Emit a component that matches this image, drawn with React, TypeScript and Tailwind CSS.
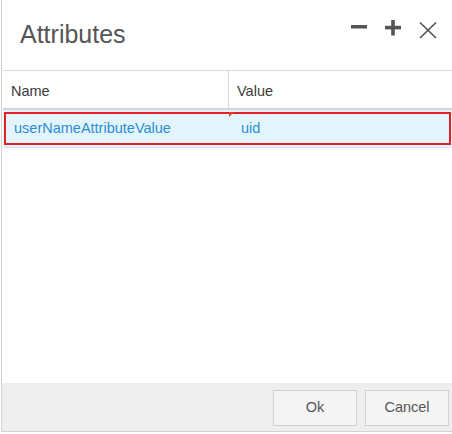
import React from "react";

const rows = [{ name: "userNameAttributeValue", value: "uid" }];

const App: React.FC = () => {
  return (
    <div className="w-[452px] h-[434px] bg-white overflow-hidden font-['Liberation_Sans',Arial,sans-serif]">
      <div className="ml-px h-[432px] flex flex-col border-l border-b border-[#d2d2d2] bg-white">
        {/* Header */}
        <div className="h-[70px] flex items-start shrink-0">
          <h1 className="pl-[18px] pt-[22px] text-[25px] leading-[25px] text-[#555555]">Attributes</h1>
          <div className="ml-auto mr-[14px] mt-[19px] flex gap-[16px] text-[#555555]">
            <svg width="18" height="20" viewBox="0 0 18 20">
              <rect x="1" y="6" width="16" height="3.5" fill="currentColor" />
            </svg>
            <svg width="18" height="20" viewBox="0 0 18 20">
              <rect x="1" y="6.8" width="16" height="3.6" fill="currentColor" />
              <rect x="7.2" y="1" width="3.6" height="15.5" fill="currentColor" />
            </svg>
            <svg width="20" height="20" viewBox="0 0 20 20">
              <path d="M2 3.5 L18 19 M18 3.5 L2 19" stroke="currentColor" strokeWidth="1.7" fill="none" />
            </svg>
          </div>
        </div>

        {/* Grid */}
        <div className="ml-px border-t border-[#d9d9d9]">
          <div className="flex h-[39px] border-b-2 border-[#d3d3d3] text-[14.5px] leading-[17px] text-[#3a3a3a]">
            <div className="w-[226px] pl-[8px] pt-[12px] border-r border-[#d9d9d9]">Name</div>
            <div className="flex-1 pl-[8px] pt-[12px]">Value</div>
          </div>
          {rows.map((r) => (
            <div key={r.name} className="relative bg-[#e4f4fd] pl-px pr-[1px] pt-[2px] pb-[2px] border-b border-[#d8e2e8]">
              <div className="flex items-center h-[33px] border-2 border-[#e21f26] text-[14.5px] text-[#2a8fd0]">
                <div className="w-[224px] pl-[8px]">{r.name}</div>
                <div className="flex-1 pl-[11px]">{r.value}</div>
              </div>
              <span className="absolute left-[226px] top-[2px] w-0 h-0 border-t-[5px] border-t-[#d9442e] border-r-[5px] border-r-transparent" />
            </div>
          ))}
        </div>

        <div className="flex-1" />

        {/* Footer */}
        <div className="h-[48px] bg-[#eeeeee] flex justify-end items-start gap-[8px] pt-[7px] pr-[3px]">
          <button className="w-[84px] h-[36px] border border-[#d0d0d0] bg-[#f5f5f5] text-[14.5px] text-[#555555]">Ok</button>
          <button className="w-[84px] h-[36px] border border-[#d0d0d0] bg-[#f5f5f5] text-[14.5px] text-[#555555]">Cancel</button>
        </div>
      </div>
    </div>
  );
};

export default App;
